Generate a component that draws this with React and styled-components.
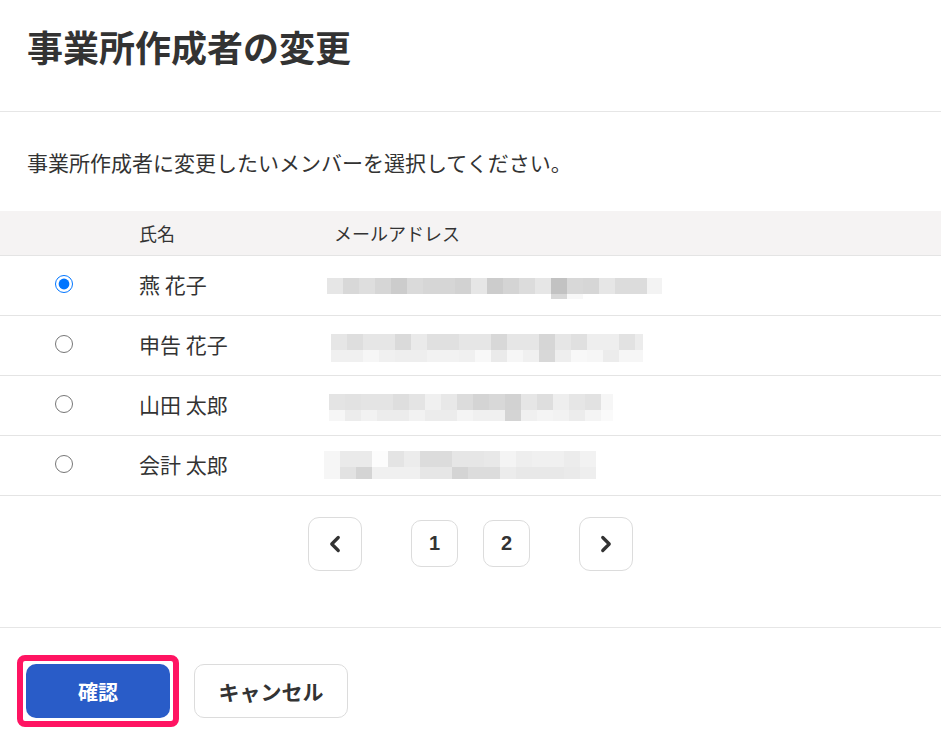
import styled, { createGlobalStyle } from "styled-components";
import { ChevronLeft, ChevronRight } from "lucide-react";

const members = [
  {
    id: 1,
    name: "燕 花子",
    checked: true,
    mosaic: {
      x: -7,
      y: 22,
      rows: [
        { h: 16, cells: ["e6", "d8", "de", "d6", "cc", "da", "d6", "d6", "d2", "e6", "cc", "d4", "dc", "e6", "c2", "d8", "d6", "e6", "dc", "dc", "f3"], last: 15 },
        { h: 5, cells: [null, null, null, null, null, null, null, null, null, null, null, null, null, null, "d8", "f8"] },
      ],
    },
  },
  {
    id: 2,
    name: "申告 花子",
    mosaic: {
      x: -3,
      y: 18,
      rows: [
        { h: 16, cells: ["e6", "de", "e6", "e6", "da", "ea", "e0", "e0", "e6", "e6", "d8", "e6", "e6", "d6", "e6", "e0", "ee", "ee", "e2", "ec"], last: 8 },
        { h: 12, cells: ["f0", "f0", "f6", "f0", "ee", "ee", "f2", "f2", "f0", "f8", "ea", "f6", "f0", "d8", "ee", "f8", "f6", "ec", "f6", "f6"], last: 8 },
      ],
    },
  },
  {
    id: 3,
    name: "山田 太郎",
    mosaic: {
      x: -5,
      y: 18,
      rows: [
        { h: 16, cells: ["e4", "e2", "e4", "e4", "de", "e4", "f0", "e8", "dc", "d4", "d8", "d2", "e6", "de", "ee", "e6", "e2", "f6"], last: 12 },
        { h: 11, cells: ["f6", "ec", "f2", "ec", "ec", "f2", "ec", "ec", "f4", "f0", "f0", "d4", "f0", "f4", "f2", "ec", "f4", "fa"], last: 12 },
      ],
    },
  },
  {
    id: 4,
    name: "会計 太郎",
    mosaic: {
      x: -10,
      y: 15,
      rows: [
        { h: 16, cells: ["f6", "ea", "ea", "fc", "e4", "ec", "dc", "dc", "e6", "e6", "e8", "f4", "ee", "f0", "f0", "ec", "f2"] },
        { h: 12, cells: ["f6", "e2", "d4", "f0", "f0", "f0", "e6", "e6", "d4", "dc", "dc", "ec", "e8", "e8", "e8", "ea", "ee"] },
      ],
    },
  },
];

const GlobalStyle = createGlobalStyle`
  * {
    box-sizing: border-box;
  }
  body {
    margin: 0;
    background: #fff;
    color: #333;
    font-family: "Noto Sans CJK JP", "Noto Sans", sans-serif;
  }
`;

// blurred e-mail address, drawn as a pixel mosaic
const Mosaic = ({ x, y, rows }) => {
  let top = y;
  const rects = [];
  rows.forEach((row, r) => {
    row.cells.forEach((c, i) => {
      if (!c) return;
      const w = i === row.cells.length - 1 && row.last ? row.last : 16;
      rects.push(
        <rect
          key={`${r}-${i}`}
          x={i * 16}
          y={top}
          width={w}
          height={row.h}
          fill={`#${c}${c}${c}`}
        />
      );
    });
    top += row.h;
  });
  return (
    <MosaicSvg $shift={x} width="360" height="59" viewBox="0 0 360 59">
      {rects}
    </MosaicSvg>
  );
};

const App = () => {
  return (
    <Page>
      <GlobalStyle />
      <Header>
        <Title>事業所作成者の変更</Title>
      </Header>

      <Description>
        事業所作成者に変更したいメンバーを選択してください。
      </Description>

      <Table>
        <HeadRow>
          <span />
          <HeadCell>氏名</HeadCell>
          <HeadCell>メールアドレス</HeadCell>
        </HeadRow>
        {members.map((m) => (
          <Row key={m.id}>
            <RadioCell>
              <Radio
                type="radio"
                name="owner"
                defaultChecked={!!m.checked}
              />
            </RadioCell>
            <NameCell>{m.name}</NameCell>
            <EmailCell>
              <Mosaic {...m.mosaic} />
            </EmailCell>
          </Row>
        ))}
      </Table>

      <Pagination>
        <ArrowButton aria-label="前へ">
          <ChevronLeft size={26} strokeWidth={3} />
        </ArrowButton>
        <Pages>
          <PageButton>1</PageButton>
          <PageButton>2</PageButton>
        </Pages>
        <ArrowButton aria-label="次へ">
          <ChevronRight size={26} strokeWidth={3} />
        </ArrowButton>
      </Pagination>

      <Footer>
        <Highlight>
          <PrimaryButton>確認</PrimaryButton>
        </Highlight>
        <SecondaryButton>キャンセル</SecondaryButton>
      </Footer>
    </Page>
  );
};

export default App;

const Page = styled.div`
  width: 941px;
  min-height: 743px;
  background: #fff;
`;

const Header = styled.div`
  height: 112px;
  padding: 23px 27px 0;
  border-bottom: 1px solid #e6e6e6;
`;

const Title = styled.h1`
  margin: 0;
  font-size: 36px;
  line-height: 46px;
  font-weight: 700;
  color: #333;
`;

const Description = styled.p`
  margin: 0;
  padding: 35px 27px 34px;
  font-size: 21px;
  line-height: 30px;
  color: #333;
`;

const Table = styled.div`
  display: flex;
  flex-direction: column;
`;

const HeadRow = styled.div`
  display: grid;
  grid-template-columns: 128px 195px 1fr;
  align-items: center;
  height: 45px;
  background: #f5f3f3;
  border-bottom: 1px solid #e4e4e4;
`;

const HeadCell = styled.span`
  padding-left: 11px;
  font-size: 18px;
  line-height: 24px;
  color: #333;
`;

const Row = styled.div`
  display: grid;
  grid-template-columns: 128px 195px 1fr;
  align-items: center;
  height: 60px;
  border-bottom: 1px solid #e4e4e4;
`;

const RadioCell = styled.div`
  display: flex;
  justify-content: center;
  padding-bottom: 3px;
`;

const Radio = styled.input`
  width: 18px;
  height: 18px;
  margin: 0;
`;

const NameCell = styled.div`
  padding-left: 11px;
  padding-bottom: 4px;
  font-size: 21px;
  line-height: 28px;
  color: #333;
`;

const EmailCell = styled.div`
  align-self: stretch;
  padding-left: 11px;
  overflow: hidden;
`;

const MosaicSvg = styled.svg`
  display: block;
  margin-left: ${(p) => p.$shift}px;
`;

const Pagination = styled.div`
  display: flex;
  justify-content: center;
  align-items: center;
  gap: 49px;
  height: 132px;
  padding-bottom: 36px;
  border-bottom: 1px solid #e6e6e6;
`;

const Pages = styled.div`
  display: flex;
  gap: 25px;
`;

const BaseButton = styled.button`
  display: inline-flex;
  align-items: center;
  justify-content: center;
  background: #fff;
  border: 1px solid #dcdcdc;
  color: #333;
  font-family: inherit;
  cursor: pointer;
  padding: 0;
`;

const ArrowButton = styled(BaseButton)`
  width: 54px;
  height: 54px;
  border-radius: 11px;
`;

const PageButton = styled(BaseButton)`
  width: 47px;
  height: 47px;
  border-radius: 10px;
  font-family: "Liberation Sans", Arial, sans-serif;
  font-size: 20px;
  font-weight: 700;
`;

const Footer = styled.div`
  display: flex;
  align-items: center;
  gap: 15px;
  padding: 27px 17px 15px;
`;

const Highlight = styled.div`
  display: flex;
  padding: 3px;
  border: 6px solid #ff1462;
  border-radius: 8px;
  background: #fff;
`;

const PrimaryButton = styled.button`
  width: 144px;
  height: 54px;
  border: none;
  border-radius: 10px;
  background: #295cc8;
  color: #fff;
  font-family: inherit;
  font-size: 20px;
  font-weight: 700;
  cursor: pointer;
`;

const SecondaryButton = styled.button`
  width: 154px;
  height: 54px;
  border: 1px solid #dcdcdc;
  border-radius: 10px;
  background: #fff;
  color: #333;
  font-family: inherit;
  font-size: 21px;
  font-weight: 700;
  cursor: pointer;
`;
